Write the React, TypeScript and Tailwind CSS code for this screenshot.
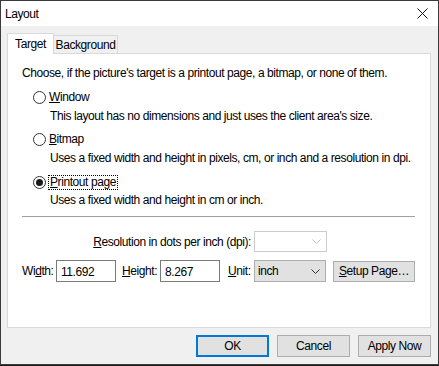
import { ReactNode } from 'react';

const Radio = ({ checked }: { checked?: boolean }) => (
  <span className="flex h-[13px] w-[13px] shrink-0 items-center justify-center rounded-full border border-[#333333] bg-white">
    {checked ? <span className="h-[7px] w-[7px] rounded-full bg-[#1a1a1a]" /> : null}
  </span>
);

const Chevron = ({ color }: { color: string }) => (
  <svg width="9" height="5" viewBox="0 0 9 5" className="shrink-0">
    <path d="M0.5 0.5 L4.5 4.5 L8.5 0.5" fill="none" stroke={color} strokeWidth="1" />
  </svg>
);

const Button = ({ children, focused, className }: { children: ReactNode; focused?: boolean; className?: string }) => (
  <button
    type="button"
    className={`flex items-center justify-center bg-[#e1e1e1] text-black ${
      focused ? 'border-2 border-[#0078d7]' : 'border border-[#adadad]'
    } ${className ?? ''}`}
  >
    {children}
  </button>
);

export default function App() {
  return (
    <div className="h-[366px] w-[439px] bg-[#1e1e1e] font-['Liberation_Sans',sans-serif] text-[12px] tracking-[-0.42px] text-black">
      <div className="flex h-[365px] w-[439px] flex-col border border-[#3a3a3a] bg-[#f0f0f0]">
        {/* title bar */}
        <div className="flex h-[25px] shrink-0 items-center justify-between bg-white pl-[4px] pr-[10px]">
          <span>Layout</span>
          <svg width="11" height="11" viewBox="0 0 11 11">
            <path d="M0.5 0.5 L10.5 10.5 M10.5 0.5 L0.5 10.5" stroke="#111" strokeWidth="1" />
          </svg>
        </div>

        <div className="flex flex-1 flex-col px-[6px] pt-[7px]">
          {/* tabs */}
          <div className="relative z-10 flex h-[20px] items-end">
            <div className="-mb-px flex h-[21px] w-[47px] items-center justify-center border border-b-0 border-[#d9d9d9] bg-white">
              Target
            </div>
            <div className="flex h-[18px] w-[64px] items-center justify-center border border-l-0 border-b-0 border-[#d9d9d9]">
              Background
            </div>
          </div>

          {/* panel */}
          <div className="h-[275px] w-[424px] border border-[#d9d9d9] bg-white pl-[14px] pt-[11px]">
            <div className="flex h-[16px] items-center">
              Choose, if the picture's target is a printout page, a bitmap, or none of them.
            </div>

            <div className="mt-[8px] flex h-[16px] items-center gap-[3px] pl-[11px]">
              <Radio />
              <span>
                <u>W</u>indow
              </span>
            </div>
            <div className="mt-[3px] flex h-[16px] items-center pl-[28px]">
              This layout has no dimensions and just uses the client area's size.
            </div>

            <div className="mt-[7px] flex h-[16px] items-center gap-[3px] pl-[11px]">
              <Radio />
              <span>
                <u>B</u>itmap
              </span>
            </div>
            <div className="mt-[3px] flex h-[16px] items-center pl-[28px]">
              Uses a fixed width and height in pixels, cm, or inch and a resolution in dpi.
            </div>

            <div className="mt-[8px] flex h-[16px] items-center gap-[2px] pl-[11px]">
              <Radio checked />
              <span className="border border-dotted border-black px-px leading-[13px]">
                <u>P</u>rintout page
              </span>
            </div>
            <div className="mt-[2px] flex h-[16px] items-center pl-[28px]">
              Uses a fixed width and height in cm or inch.
            </div>

            <div className="mt-[8px] h-px w-[393px] bg-[#a0a0a0]" />

            <div className="mt-[14px] flex h-[21px] items-center">
              <span className="w-[232px] pr-[3px] text-right">
                <u>R</u>esolution in dots per inch (dpi):
              </span>
              <div className="flex h-[21px] w-[73px] items-center justify-end border border-[#cccccc] bg-white pr-[5px]">
                <Chevron color="#bfbfbf" />
              </div>
            </div>

            <div className="mt-[8px] flex h-[22px] items-center">
              <span className="w-[34px]">
                Wi<u>d</u>th:
              </span>
              <div className="flex h-[22px] w-[60px] items-start border border-[#7a7a7a] bg-white pl-[4px] pt-[2px]">
                11.692
              </div>
              <span className="ml-[6px] w-[38px]">
                <u>H</u>eight:
              </span>
              <div className="flex h-[22px] w-[60px] items-start border border-[#7a7a7a] bg-white pl-[4px] pt-[2px]">
                8.267
              </div>
              <span className="ml-[8px] w-[26px]">
                <u>U</u>nit:
              </span>
              <div className="flex h-[22px] w-[72px] items-center justify-between border border-[#adadad] bg-[#e1e1e1] pl-[3px] pr-[5px]">
                <span>inch</span>
                <Chevron color="#333333" />
              </div>
              <Button className="ml-[7px] h-[21px] w-[82px]">
                <span>
                  <u>S</u>etup Page…
                </span>
              </Button>
            </div>
          </div>

          {/* bottom buttons */}
          <div className="mt-[7px] flex justify-end gap-[8px] pr-[1px]">
            <Button focused className="h-[22px] w-[73px]">
              OK
            </Button>
            <Button className="h-[22px] w-[73px]">Cancel</Button>
            <Button className="h-[22px] w-[73px]">Apply Now</Button>
          </div>
        </div>
      </div>
    </div>
  );
}
